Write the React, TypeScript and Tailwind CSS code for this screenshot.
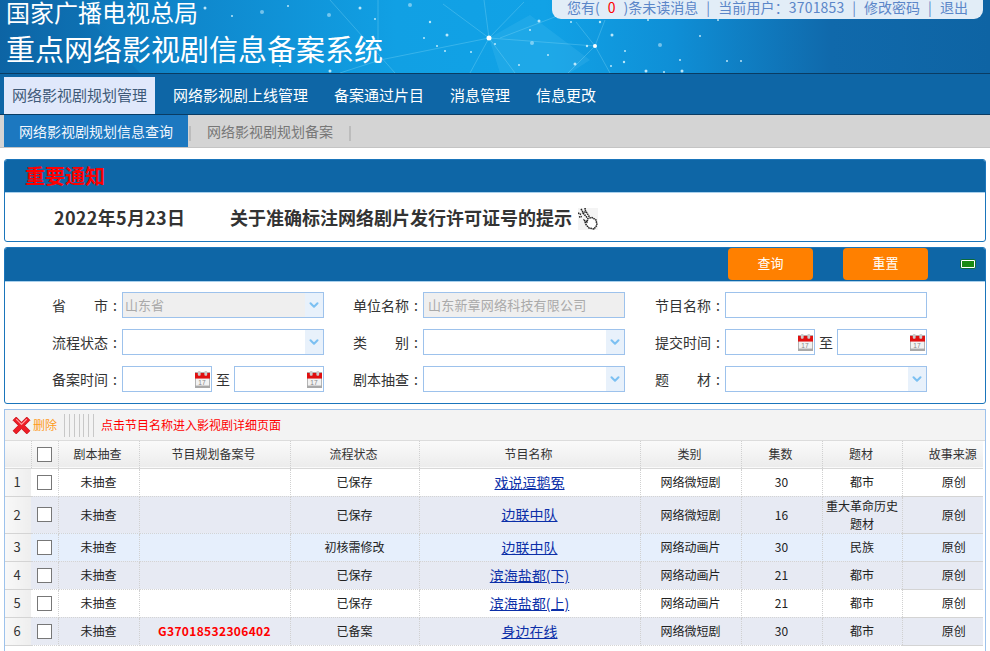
import { ChevronDown } from "lucide-react"

const rows = [
  { n: 1, code: "", status: "已保存", name: "戏说逗鹅冤", type: "网络微短剧", count: 30, theme: "都市", bg: "bg-white", h: "h-[28px]" },
  { n: 2, code: "", status: "已保存", name: "边联中队", type: "网络微短剧", count: 16, theme: "重大革命历史题材", bg: "bg-[#e7eaf3]", h: "h-[37px]" },
  { n: 3, code: "", status: "初核需修改", name: "边联中队", type: "网络动画片", count: 30, theme: "民族", bg: "bg-[#e6effc]", h: "h-[28px]" },
  { n: 4, code: "", status: "已保存", name: "滨海盐都(下)", type: "网络动画片", count: 21, theme: "都市", bg: "bg-[#e7eaf3]", h: "h-[28px]" },
  { n: 5, code: "", status: "已保存", name: "滨海盐都(上)", type: "网络动画片", count: 21, theme: "都市", bg: "bg-white", h: "h-[28px]" },
  { n: 6, code: "G37018532306402", status: "已备案", name: "身边在线", type: "网络微短剧", count: 30, theme: "都市", bg: "bg-[#e7eaf3]", h: "h-[28px]" },
]

const dots = [
  [205, 8, 1.5], [232, 16, 1], [262, 12, 2], [288, 6, 1], [329, 15, 2], [360, 8, 1.5], [375, 19, 1], [410, 5, 2], [430, 22, 1.2],
  [424, 38, 1], [447, 35, 1.5], [471, 52, 1], [495, 44, 1], [530, 30, 1], [539, 21, 1.5], [532, 43, 2], [571, 22, 1], [587, 46, 1.2],
  [624, 62, 1.2], [625, 51, 1], [600, 22, 1.2], [612, 35, 1.5], [608, 16, 1], [648, 20, 1], [680, 60, 1], [681, 12, 1.5], [660, 45, 2],
  [611, 66, 1], [575, 64, 1.5], [548, 55, 1], [519, 65, 1], [437, 46, 1], [445, 51, 1], [330, 71, 1.5], [280, 66, 1], [727, 61, 1],
  [646, 71, 1.5], [682, 71, 1.5], [664, 72, 1], [700, 36, 1], [718, 20, 1], [741, 61, 1],
]

function BannerArt() {
  return (
    <svg className="absolute inset-0" width="990" height="73" viewBox="0 0 990 73">
      <polygon points="489,38 530,15 590,60 570,73 500,73" fill="#5cc6f2" opacity="0.18" />
      <polygon points="0,0 70,0 140,73 0,73" fill="#0b5f9e" opacity="0.2" />
      <g stroke="#8adcf8" strokeWidth="0.8" opacity="0.4">
        <line x1="489" y1="38" x2="443" y2="4" />
        <line x1="489" y1="38" x2="524" y2="2" />
        <line x1="489" y1="38" x2="484" y2="0" />
        <line x1="489" y1="38" x2="515" y2="73" />
        <line x1="489" y1="38" x2="470" y2="73" />
        <line x1="489" y1="38" x2="380" y2="60" />
        <line x1="380" y1="60" x2="340" y2="73" />
        <line x1="489" y1="38" x2="595" y2="46" />
        <line x1="595" y1="46" x2="576" y2="22" />
        <line x1="595" y1="46" x2="605" y2="20" />
        <line x1="595" y1="46" x2="610" y2="73" />
        <line x1="595" y1="46" x2="568" y2="73" />
        <line x1="330" y1="0" x2="395" y2="73" />
        <line x1="378" y1="0" x2="378" y2="50" />
        <line x1="500" y1="38" x2="560" y2="15" />
      </g>
      {dots.map(([x, y, r], i) => (
        <circle key={i} cx={x} cy={y} r={r} fill="#d8f4ff" opacity={r > 1.6 ? 0.5 : 0.85} />
      ))}
      <circle cx="489" cy="38" r="2.5" fill="#fff" />
      <circle cx="595" cy="46" r="2" fill="#fff" />
    </svg>
  )
}

function CalendarIcon() {
  return (
    <svg width="15" height="17" viewBox="0 0 16 18" className="shrink-0">
      <rect x="0.5" y="1.5" width="15" height="16" fill="#f2f2f2" stroke="#b0b0b0" />
      <rect x="0" y="2" width="16" height="6" fill="#e01010" />
      <rect x="3" y="0" width="3" height="5" rx="1" fill="#ccc" />
      <rect x="10" y="0" width="3" height="5" rx="1" fill="#ccc" />
      <rect x="0" y="15.5" width="16" height="2.5" fill="#a8a8a8" />
      <text x="3.5" y="14.5" fontSize="7" fill="#888" fontFamily="Liberation Sans">17</text>
    </svg>
  )
}

function Combo({ value, disabled }: { value?: string; disabled?: boolean }) {
  return (
    <div className={`flex h-[26px] w-[202px] items-center border border-[#9dc2ec] ${disabled ? "bg-[#efefef]" : "bg-white"}`}>
      <span className="flex-1 pl-[2px] text-[13px] text-[#aaa]">{value}</span>
      <span className="flex h-full w-[18px] items-center justify-center bg-[#e8f1fb]">
        <ChevronDown size={14} strokeWidth={3.5} className="text-[#7cc0f2]" />
      </span>
    </div>
  )
}

function DateInput() {
  return (
    <div className="flex h-[26px] w-[90px] items-center justify-end border border-[#9dc2ec] bg-white pr-px">
      <CalendarIcon />
    </div>
  )
}

function DateRange() {
  return (
    <div className="flex w-[202px] items-center justify-between text-[14px] text-[#333]">
      <DateInput />
      <span>至</span>
      <DateInput />
    </div>
  )
}

function Field({ label, children }: { label: string[]; children: React.ReactNode }) {
  return (
    <div className="flex items-center">
      <div className="flex w-[65px] text-[14px] text-[#333]">
        <span className="flex w-[56px] justify-between">
          {label.map((s) => (
            <span key={s}>{s}</span>
          ))}
        </span>
        <span className="ml-auto">:</span>
      </div>
      <div className="ml-[5px]">{children}</div>
    </div>
  )
}

function HandIcon() {
  return (
    <span className="ml-[6px] mt-[3px] inline-flex h-[22px] w-[20px] items-center justify-center bg-[#f4f4f4]">
      <svg width="20" height="22" viewBox="0 0 20 22" fill="none" stroke="#222" strokeWidth="1.5" strokeDasharray="1.6 0.6">
        <path d="M5 5 L10 10.5 L9 14 L6.5 12.5 L8 16.5 L11 20 L16 21 L19 17 L18 12 L14 9.5 L12 10 L8 3.5 Z" fill="#fff" />
        <path d="M3 1 L5 4 M0 5 L3 6.5 M7 0 L7.5 3 M1 9 L4 8.5" />
      </svg>
    </span>
  )
}

const th = "border-r border-dotted border-r-[#d0d0d0] pr-[2px] font-normal"
const td = "border-r border-dotted border-r-[#d0d0d0] border-b border-b-[#d4d4d4] text-center"

export default function App() {
  return (
    <div className="h-[651px] w-full overflow-hidden bg-white font-['Noto_Sans_CJK_SC',sans-serif] text-[12px] text-[#222]">
      {/* banner */}
      <div className="relative h-[73px] overflow-hidden bg-[linear-gradient(to_right,#0e66a6_0%,#0f86cb_18%,#11a0e4_40%,#11a2e6_55%,#0f8fd6_68%,#1069ab_84%,#0e64a4_100%)]">
        <BannerArt />
        <div className="relative pl-[6px] text-white">
          <div className="h-[27px] text-[24px] leading-[24px]">国家广播电视总局</div>
          <div className="mt-[3px] text-[29px] leading-[36px]">重点网络影视剧信息备案系统</div>
        </div>
        <div className="absolute right-[7px] top-0 flex h-[19px] w-[431px] items-start justify-center gap-[8px] rounded-b-[9px] bg-[#e2edf7] text-[14px] leading-[14px] text-[#5b86c8]">
          <span>
            您有(<span className="mx-[8px] text-[#ff0000]">0</span>)条未读消息
          </span>
          <span>|</span>
          <span className="tracking-[0.15px]">当前用户：3701853</span>
          <span>|</span>
          <span>修改密码</span>
          <span>|</span>
          <span>退出</span>
        </div>
      </div>

      {/* main nav */}
      <div className="flex h-[42px] items-end border-y border-t-[#0a3c63] border-b-[#0a3c63] bg-[#0e66a6] pl-[4px] text-[15px] text-white">
        <div className="flex h-[37px] w-[151px] items-center justify-center bg-[#e0e8fb] text-[#3f5a78]">网络影视剧规划管理</div>
        <div className="ml-[18px] flex h-[37px] items-center gap-[26px]">
          <span>网络影视剧上线管理</span>
          <span>备案通过片目</span>
          <span>消息管理</span>
          <span>信息更改</span>
        </div>
      </div>

      {/* sub nav */}
      <div className="flex h-[33px] items-end border-b border-[#c4c4c4] bg-[#d4d4d4] pl-[4px] text-[14px]">
        <div className="flex h-[32px] w-[184px] items-center justify-center bg-[#1c78c0] text-[#f2f7fd]">网络影视剧规划信息查询</div>
        <div className="mb-[6px] ml-[1px] h-[15px] w-[2px] bg-[#bcbcbc]" />
        <div className="flex h-[32px] items-center pl-[16px] pr-[16px] text-[#777]">网络影视剧规划备案</div>
        <div className="mb-[6px] h-[15px] w-[2px] bg-[#bcbcbc]" />
      </div>

      <div className="flex flex-col px-[4px] pt-[11px]">
        {/* notice */}
        <div className="h-[83px] overflow-hidden rounded-[3px] border border-[#1a75bb]">
          <div className="flex h-[32px] items-center bg-[#0e66a6] pl-[20px] text-[20px] font-bold text-[#ff0000]">重要通知</div>
          <div className="flex h-[49px] items-center border-t border-[#a9d0ec] pl-[49px] text-[18px] font-bold text-[#333]">
            <span className="w-[176px] tracking-[0.3px]">2022年5月23日</span>
            <span>关于准确标注网络剧片发行许可证号的提示</span>
            <HandIcon />
          </div>
        </div>

        {/* search */}
        <div className="mt-[5px] h-[157px] overflow-hidden rounded-[3px] border border-[#1a75bb]">
          <div className="flex h-[34px] items-start border-b border-[#a9d0ec] bg-[#0e66a6] pl-[723px] text-[13px] text-white">
            <button className="h-[32px] w-[85px] rounded-[4px] bg-[#ff8000] pb-[2px]">查询</button>
            <button className="ml-[30px] h-[32px] w-[85px] rounded-[4px] bg-[#ff8000] pb-[2px]">重置</button>
            <span className="ml-[32px] mt-[11px] flex h-[10px] w-[16px] items-center justify-center rounded-[2px] border border-[#0a6a3a] bg-white">
              <span className="h-[6px] w-[12px] bg-[#1a8a12]" />
            </span>
          </div>
          <div className="grid grid-cols-[301px_302px_auto] gap-y-[11px] pl-[47px] pt-[10px]">
            <Field label={["省", "市"]}>
              <Combo value="山东省" disabled />
            </Field>
            <Field label={["单位名称"]}>
              <div className="flex h-[26px] w-[202px] items-center border border-[#9dc2ec] bg-[#efefef] pl-[4px] text-[13px] tracking-[0.2px] text-[#aaa]">山东新章网络科技有限公司</div>
            </Field>
            <Field label={["节目名称"]}>
              <div className="h-[26px] w-[202px] border border-[#9dc2ec] bg-white" />
            </Field>
            <Field label={["流程状态"]}>
              <Combo />
            </Field>
            <Field label={["类", "别"]}>
              <Combo />
            </Field>
            <Field label={["提交时间"]}>
              <DateRange />
            </Field>
            <Field label={["备案时间"]}>
              <DateRange />
            </Field>
            <Field label={["剧本抽查"]}>
              <Combo />
            </Field>
            <Field label={["题", "材"]}>
              <Combo />
            </Field>
          </div>
        </div>

        {/* list */}
        <div className="mt-[5px] h-[260px] border border-[#9dc2ec]">
          <div className="flex h-[31px] items-center border-b border-[#dcdcdc] bg-[#f3f3f3] pl-[7px]">
            <svg width="19" height="19" viewBox="0 0 18 18">
              <path d="M4 1 L9 6 L14 1 L17 4 L12 9 L17 14 L14 17 L9 12 L4 17 L1 14 L6 9 L1 4 Z" fill="#ee1c25" stroke="#c81018" strokeWidth="0.8" strokeLinejoin="round" />
              <path d="M4 3 L9 8 L14 3" fill="none" stroke="#ff9a9a" strokeWidth="1.2" />
            </svg>
            <span className="ml-[2px] text-[#ff9a1a]">删除</span>
            <span className="ml-[7px] flex h-[23px] w-[30px] justify-between">
              {[0, 1, 2, 3, 4, 5, 6].map((i) => (
                <span key={i} className="h-full w-px bg-[#c8c8c8]" />
              ))}
            </span>
            <span className="ml-[7px] text-[#ff0000]">点击节目名称进入影视剧详细页面</span>
          </div>
          <table className="w-[978px] table-fixed border-collapse">
            <colgroup>
              <col className="w-[26px]" />
              <col className="w-[27px]" />
              <col className="w-[81px]" />
              <col className="w-[151px]" />
              <col className="w-[129px]" />
              <col className="w-[221px]" />
              <col className="w-[101px]" />
              <col className="w-[81px]" />
              <col className="w-[80px]" />
              <col className="w-[81px]" />
            </colgroup>
            <thead>
              <tr className="h-[27px] border-b border-[#d8d8d8] bg-[linear-gradient(to_bottom,#fafafa,#ececec)] text-[12px] text-[#333]">
                <th className={th} />
                <th className="border-r border-dotted border-r-[#d0d0d0] font-normal">
                  <span className="mx-auto block h-[15px] w-[15px] border border-[#777] bg-white" />
                </th>
                <th className={th}>剧本抽查</th>
                <th className={th}>节目规划备案号</th>
                <th className={th}>流程状态</th>
                <th className={th}>节目名称</th>
                <th className={th}>类别</th>
                <th className={th}>集数</th>
                <th className={th}>题材</th>
                <th className="pl-[20px] font-normal">故事来源</th>
              </tr>
            </thead>
            <tbody>
              {rows.map((r) => (
                <tr key={r.n} className={`${r.h} ${r.bg}`}>
                  <td className="border-b border-b-[#d4d4d4] bg-[linear-gradient(to_right,#f8f8f8,#eeeeee)] pr-[2px] text-center text-[13px] text-[#333]">{r.n}</td>
                  <td className={td}>
                    <span className="mx-auto block h-[15px] w-[15px] border border-[#777] bg-white" />
                  </td>
                  <td className={td}>未抽查</td>
                  <td className={`${td} font-bold tracking-[0.35px] text-[#ff0000]`}>{r.code}</td>
                  <td className={td}>{r.status}</td>
                  <td className={td}>
                    <a className="text-[14px] text-[#0b2fa8] underline">{r.name}</a>
                  </td>
                  <td className={td}>{r.type}</td>
                  <td className={td}>{r.count}</td>
                  <td className={`${td} px-[3px] leading-[18px]`}>{r.theme}</td>
                  <td className="border-b border-b-[#d4d4d4] pl-[22px] text-center">原创</td>
                </tr>
              ))}
            </tbody>
          </table>
        </div>
      </div>
    </div>
  )
}
